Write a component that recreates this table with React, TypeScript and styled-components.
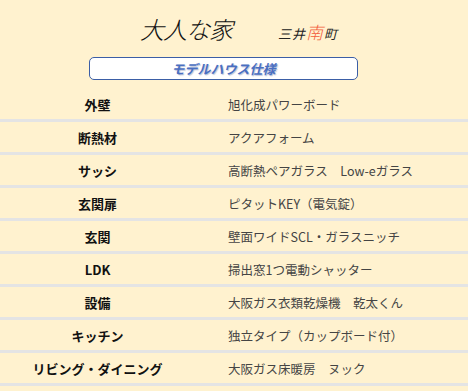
import React from "react";
import styled, { createGlobalStyle } from "styled-components";

const GlobalStyle = createGlobalStyle`
  html, body {
    margin: 0;
    padding: 0;
    background: #fff2cf;
    font-family: "Noto Sans CJK JP", "Noto Sans", sans-serif;
  }
`;

const specs: [string, string][] = [
  ["外壁", "旭化成パワーボード"],
  ["断熱材", "アクアフォーム"],
  ["サッシ", "高断熱ペアガラス　Low-eガラス"],
  ["玄関扉", "ピタットKEY（電気錠）"],
  ["玄関", "壁面ワイドSCL・ガラスニッチ"],
  ["LDK", "掃出窓1つ電動シャッター"],
  ["設備", "大阪ガス衣類乾燥機　乾太くん"],
  ["キッチン", "独立タイプ（カップボード付）"],
  ["リビング・ダイニング", "大阪ガス床暖房　ヌック"],
];

export default function App() {
  return (
    <>
      <GlobalStyle />
      <Page>
        <Header>
          <TitleRow>
            <Title>大人な家</Title>
            <Town>
              三井<Accent>南</Accent>町
            </Town>
          </TitleRow>
          <Badge>モデルハウス仕様</Badge>
        </Header>
        <SpecList>
          {specs.map(([label, value]) => (
            <SpecRow key={label}>
              <Label>{label}</Label>
              <Value>{value}</Value>
            </SpecRow>
          ))}
        </SpecList>
      </Page>
    </>
  );
}

const Page = styled.div`
  width: 468px;
  height: 391px;
  overflow: hidden;
  background: #fff2cf;
`;

const Header = styled.div`
  display: flex;
  flex-direction: column;
  align-items: flex-start;
  padding-top: 12px;
  height: 80px;
  box-sizing: border-box;
`;

const TitleRow = styled.div`
  display: flex;
  align-items: baseline;
  gap: 46px;
  padding-left: 140px;
  height: 33px;
`;

const Title = styled.span`
  font-size: 24px;
  font-weight: 300;
  font-style: italic;
  color: #111;
  letter-spacing: -1px;
  line-height: 33px;
`;

const Town = styled.span`
  font-size: 13px;
  font-style: italic;
  color: #222;
  letter-spacing: 1px;
`;

const Accent = styled.span`
  font-size: 17px;
  font-weight: 300;
  color: #f25c3b;
`;

const Badge = styled.div`
  margin: 12px 0 0 89px;
  width: 269px;
  height: 24px;
  box-sizing: border-box;
  border: 1.5px solid #3b5ea6;
  border-radius: 5px;
  background: #ffffff;
  display: flex;
  align-items: center;
  justify-content: center;
  font-size: 13px;
  font-weight: bold;
  font-style: italic;
  color: #4a6fc1;
  text-shadow: 1px 1px 1px rgba(60, 80, 140, 0.35);
`;

const SpecList = styled.div`
  display: flex;
  flex-direction: column;
  padding-top: 9px;
`;

const SpecRow = styled.div`
  display: grid;
  grid-template-columns: 195px 1fr;
  align-items: center;
  height: 30px;
  border-bottom: 3px solid #e4e4e4;
`;

const Label = styled.div`
  text-align: center;
  font-size: 13px;
  font-weight: bold;
  color: #111;
`;

const Value = styled.div`
  padding-left: 33px;
  font-size: 12.5px;
  color: #444;
`;
